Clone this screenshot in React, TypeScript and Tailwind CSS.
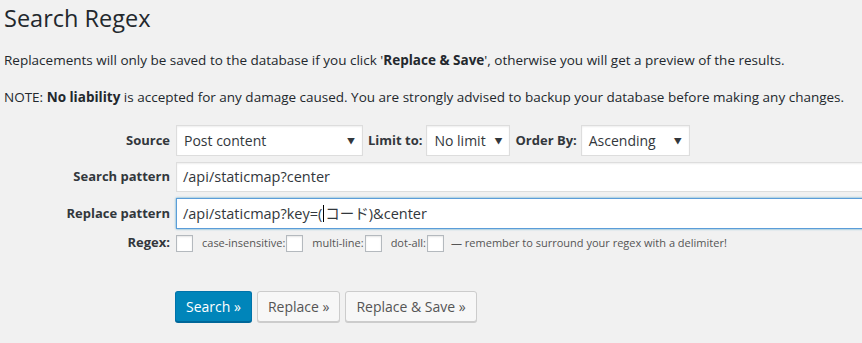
const font = { fontFamily: '"Open Sans", "Noto Sans CJK JP", sans-serif' };

function Select({ value, width }: { value: string; width: string }) {
  return (
    <div
      className={`relative h-[31px] ${width} bg-white border border-[#ddd] shadow-[inset_0_1px_2px_rgba(0,0,0,0.07)] flex items-center pl-[7px] text-[14px] text-[#32373c]`}
    >
      <span>{value}</span>
      <span className="absolute right-[7px] top-[9px] text-[8px] text-[#32373c]">▼</span>
    </div>
  );
}

function Check() {
  return (
    <span className="inline-block w-[17px] h-[17px] bg-white border border-[#b4b9be] shadow-[inset_0_1px_2px_rgba(0,0,0,0.1)]" />
  );
}

export default function App() {
  return (
    <div className="w-[862px] h-[343px] overflow-hidden bg-[#f1f1f1] text-[#23282d]" style={font}>
      <h1 className="pl-[4px] pt-[4px] text-[23.5px] leading-[29px] font-normal">Search Regex</h1>
      <p className="pl-[4px] mt-[18px] text-[13.5px] leading-[19px]">
        Replacements will only be saved to the database if you click '<b>Replace &amp; Save</b>', otherwise you will get a preview of the results.
      </p>
      <p className="pl-[4px] mt-[18px] text-[13.5px] leading-[19px]">
        NOTE: <b>No liability</b> is accepted for any damage caused. You are strongly advised to backup your database before making any changes.
      </p>

      <div className="mt-[18px] grid grid-cols-[170px_1fr] gap-x-[6px] text-[13px]">
        <div className="h-[31px] flex items-center justify-end font-bold text-[#32373c]">Source</div>
        <div className="flex items-center gap-[5px]">
          <Select value="Post content" width="w-[187px]" />
          <span className="font-bold text-[#32373c] -mr-[1px]">Limit to:</span>
          <Select value="No limit" width="w-[84px]" />
          <span className="font-bold text-[#32373c] -mr-[1px]">Order By:</span>
          <Select value="Ascending" width="w-[109px]" />
        </div>

        <div className="mt-[6px] h-[30px] flex items-center justify-end font-bold text-[#32373c]">Search pattern</div>
        <div className="mt-[6px] h-[30px] w-[720px] bg-white border border-[#ddd] shadow-[inset_0_1px_2px_rgba(0,0,0,0.07)] flex items-center pl-[6px] text-[14.5px] text-[#32373c]">
          /api/staticmap?center
        </div>

        <div className="mt-[6px] h-[31px] flex items-center justify-end font-bold text-[#32373c]">Replace pattern</div>
        <div className="mt-[6px] h-[31px] w-[720px] bg-white border border-[#5b9dd9] shadow-[0_0_2px_rgba(30,140,190,0.8)] flex items-center pl-[6px] text-[14.5px] text-[#32373c]">
          <span>/api/staticmap?key=(</span>
          <span className="inline-block w-px h-[17px] bg-black ml-[1px] mr-[1px]" />
          <span>コード)&amp;center</span>
        </div>

        <div className="mt-[5px] h-[18px] flex items-center justify-end font-bold text-[#32373c]">Regex:</div>
        <div className="mt-[5px] h-[18px] flex items-center text-[11px] text-[#555]">
          <Check />
          <span className="ml-[9px] mr-[1px]">case-insensitive:</span>
          <Check />
          <span className="ml-[9px] mr-[1px]">multi-line:</span>
          <Check />
          <span className="ml-[9px] mr-[1px]">dot-all:</span>
          <Check />
          <span className="ml-[7px]">— remember to surround your regex with a delimiter!</span>
        </div>

        <div />
        <div className="mt-[39px] -ml-[1px] flex items-center gap-[5px] text-[14px]">
          <button className="h-[31px] px-[10px] rounded-[3px] bg-[#0085ba] border border-[#0073aa] border-b-[#006799] shadow-[0_1px_0_#006799] text-white">
            Search »
          </button>
          <button className="h-[31px] px-[10px] rounded-[3px] bg-[#f7f7f7] border border-[#ccc] shadow-[0_1px_0_#ccc] text-[#555]">
            Replace »
          </button>
          <button className="h-[31px] px-[10px] rounded-[3px] bg-[#f7f7f7] border border-[#ccc] shadow-[0_1px_0_#ccc] text-[#555]">
            Replace &amp; Save »
          </button>
        </div>
      </div>
    </div>
  );
}
